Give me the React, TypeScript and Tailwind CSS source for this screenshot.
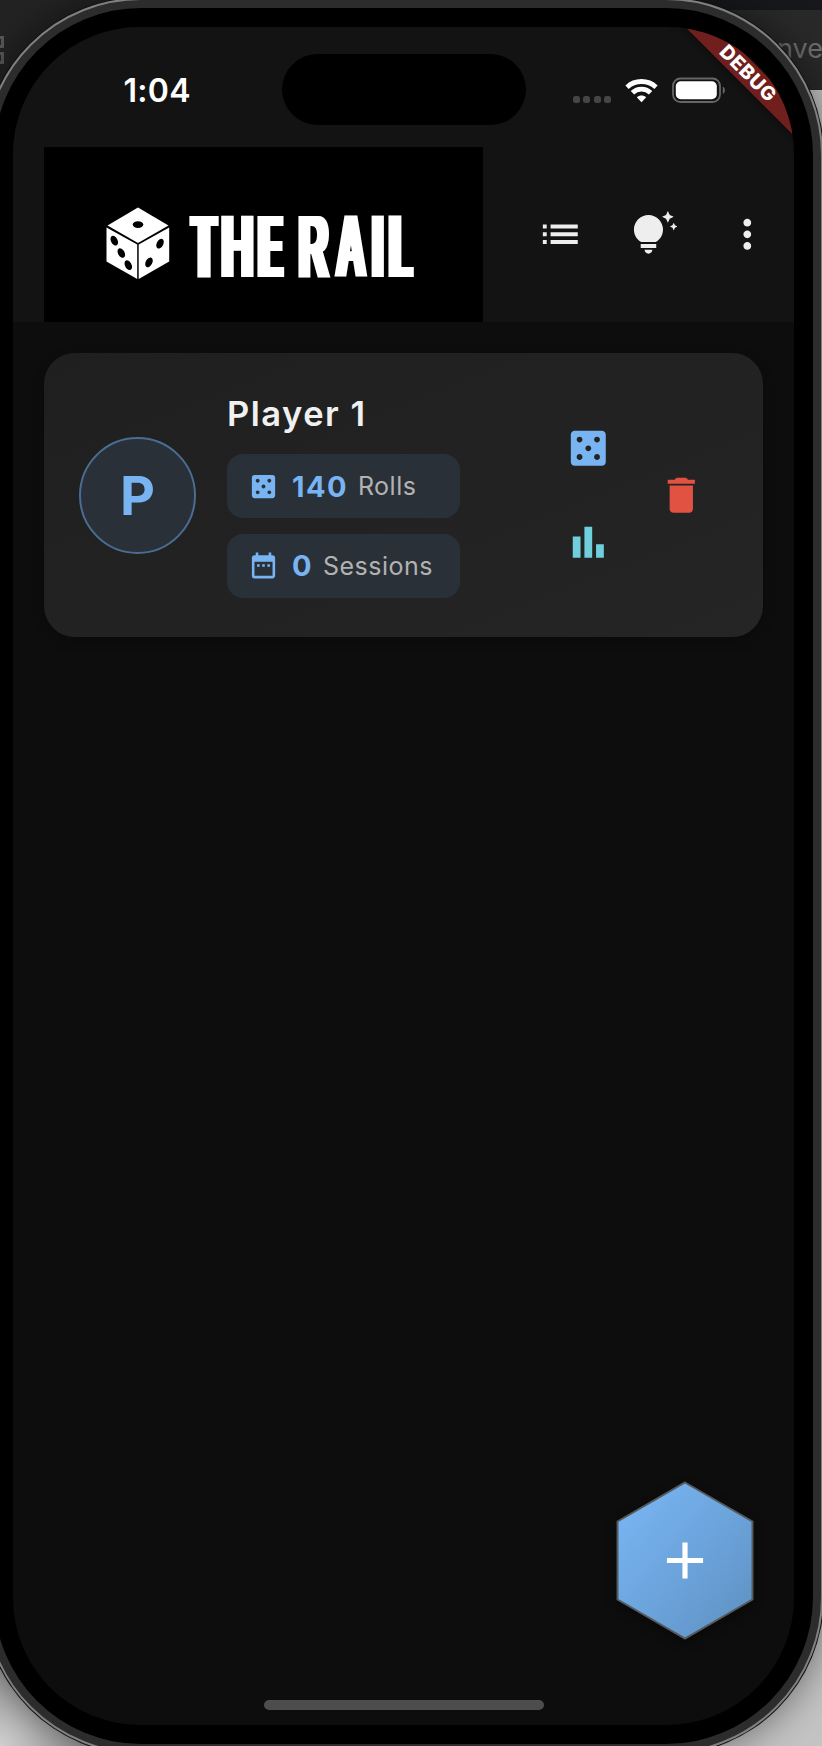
import React from "react";
import { MdAdd, MdCasino, MdDateRange, MdDelete, MdList, MdMoreVert, MdTipsAndUpdates } from "react-icons/md";

type Glyph = { ch: string; x: number; sx: number; filter: string };

const wordmark: Glyph[] = [
  { ch: "T", x: 193, sx: 0.405, filter: "url(#widen4)" },
  { ch: "H", x: 221.2, sx: 0.502, filter: "url(#widen3)" },
  { ch: "E", x: 259.2, sx: 0.374, filter: "url(#widen4)" },
  { ch: "R", x: 298.8, sx: 0.459, filter: "url(#widen3)" },
  { ch: "A", x: 336.6, sx: 0.449, filter: "url(#widen3)" },
  { ch: "I", x: 371.8, sx: 0.485, filter: "url(#widen3)" },
  { ch: "L", x: 390.2, sx: 0.379, filter: "url(#widen4)" },
];

function Logo() {
  return (
    <svg viewBox="44 147 439 175" className="h-[175px] w-[439px] bg-black" role="img">
      <defs>
        <filter id="widen3" x="-50%" y="-10%" width="200%" height="120%">
          <feMorphology operator="dilate" radius="3 0" />
        </filter>
        <filter id="widen4" x="-50%" y="-10%" width="200%" height="120%">
          <feMorphology operator="dilate" radius="4 0" />
        </filter>
      </defs>
      <g fill="#fff">
        <path d="M138 207.5 168.5 225.5 138 243 107.5 225.5Z" />
        <path d="M106.5 227.5 137.2 244.5V279L106.5 261.5Z" />
        <path d="M169.2 227.5 138.7 244.5V279L169.2 261.5Z" />
      </g>
      <g fill="#000">
        <ellipse cx="138" cy="224.6" rx="5.3" ry="3.4" />
        <ellipse cx="114.3" cy="240.7" rx="3.3" ry="5.2" transform="rotate(-28 114.3 240.7)" />
        <ellipse cx="121.3" cy="253" rx="3.3" ry="5.2" transform="rotate(-28 121.3 253)" />
        <ellipse cx="128.3" cy="265.2" rx="3.3" ry="5.2" transform="rotate(-28 128.3 265.2)" />
        <ellipse cx="160" cy="243.7" rx="3.3" ry="5.2" transform="rotate(28 160 243.7)" />
        <ellipse cx="149" cy="262.3" rx="3.3" ry="5.2" transform="rotate(28 149 262.3)" />
      </g>
      <g fill="#fff" className="font-['Liberation_Sans',sans-serif] text-[89px] font-bold">
        {wordmark.map((g) => (
          <g key={g.ch} filter={g.filter}>
            <text transform={`translate(${g.x} 277) scale(${g.sx} 1)`}>{g.ch}</text>
          </g>
        ))}
      </g>
    </svg>
  );
}

function StatusBar() {
  return (
    <div className="flex h-[120px] items-start">
      <span className="ml-[110.5px] mt-[44px] w-[90px] text-[32px] leading-[40px] font-semibold tracking-[0.3px] text-white">1:04</span>
      <div className="ml-[68px] mt-[27px] h-[71px] w-[244px] rounded-full bg-black" />
      <div className="ml-[47px] mt-[69px] flex gap-[3.5px]">
        {[0, 1, 2, 3].map((i) => (
          <span key={i} className="size-[7px] rounded-[2.5px] bg-[#454545]" />
        ))}
      </div>
      <svg viewBox="0 0 33 25" className="ml-[14px] mt-[51px] h-[25px] w-[33px]" fill="none" stroke="#fff" strokeWidth="4.8">
        <path d="M2 9.2C10 1.6 23 1.6 31 9.2" />
        <path d="M7.4 14.8C12.5 9.8 20.5 9.8 25.6 14.8" />
        <path d="M16.5 24.3 11.8 19.3C14.5 16.8 18.5 16.8 21.2 19.3Z" fill="#fff" stroke="none" />
      </svg>
      <svg viewBox="0 0 54 26" className="ml-[13.5px] mt-[50px] h-[26px] w-[54px]">
        <rect x="1" y="1.5" width="47" height="23.5" rx="7.5" fill="none" stroke="#666" strokeWidth="1.8" />
        <rect x="3.8" y="4.2" width="41" height="18" rx="5" fill="#fff" />
        <path d="M50.8 9.5C53.6 11 53.6 15.5 50.8 17Z" fill="#666" />
      </svg>
    </div>
  );
}

function Chip({ icon, value, label }: { icon: React.ReactNode; value: string; label: string }) {
  return (
    <div className="flex h-[64px] w-[233px] shrink-0 items-center rounded-[16px] bg-[#2a3038] pl-[21px]">
      {icon}
      <span className="ml-[13px] pt-px text-[29px] font-bold tracking-[1.4px] text-[#78b4f2]">{value}</span>
      <span className="ml-[10px] pt-[2px] text-[25px] tracking-[0.5px] text-[#b2b2b2]">{label}</span>
    </div>
  );
}

function PlayerCard() {
  return (
    <section className="mx-[31px] mt-[31px] flex h-[284px] rounded-[31px] bg-linear-to-br from-[#1f1f1f] to-[#252525] shadow-[0_4px_14px_rgba(0,0,0,0.2)]">
      <div className="ml-[35px] mt-[83.5px] flex size-[117px] items-center justify-center rounded-full border-2 border-[#4a6d93] bg-[#293038] text-[54px] font-bold text-[#78b4f2]">
        P
      </div>
      <div className="ml-[31px] mt-[37px] flex w-[233px] flex-col">
        <h2 className="h-[64px] text-[34.5px] leading-[47px] font-semibold tracking-[1.5px] text-[#f0f0f0]">Player 1</h2>
        <Chip icon={<MdCasino className="size-[31px] text-[#78b4f2]" />} value="140" label="Rolls" />
        <div className="h-[15.5px] shrink-0" />
        <Chip icon={<MdDateRange className="size-[31px] text-[#78b4f2]" />} value="0" label="Sessions" />
      </div>
      <div className="ml-[104.5px] flex flex-col justify-center gap-[47px]">
        <MdCasino className="size-[46.6px] text-[#78b4f2]" />
        <svg viewBox="0 0 24 24" className="size-[46.6px] fill-[#70cfdc]">
          <path d="M4 9h4v11H4zm12 4h4v7h-4zM10 4h4v16h-4z" />
        </svg>
      </div>
      <div className="ml-[46.5px] flex items-center">
        <MdDelete className="size-[46.6px] text-[#e15243]" />
      </div>
    </section>
  );
}

function Screen() {
  return (
    <div className="relative flex h-[1698px] w-[781px] flex-col overflow-hidden rounded-[127px] bg-[#0d0d0d]">
      <header className="h-[295px] shrink-0 bg-[#131313]">
        <StatusBar />
        <div className="flex h-[175px] items-center pl-[31px]">
          <Logo />
          <MdList className="ml-[54px] size-[46.6px] text-[#eee]" />
          <MdTipsAndUpdates className="ml-[47px] size-[46.6px] text-[#eee]" />
          <MdMoreVert className="ml-[46.5px] size-[46.6px] text-[#eee]" />
        </div>
      </header>
      <PlayerCard />
      <button className="mt-auto mr-[40px] mb-[60px] self-end">
        <svg viewBox="0 0 138 159" className="block h-[159px] w-[138px] drop-shadow-[0_4px_6px_rgba(0,0,0,0.35)]">
          <defs>
            <linearGradient id="fab" x1="0" y1="0" x2="1" y2="1">
              <stop offset="0.1" stopColor="#78b4f2" />
              <stop offset="0.9" stopColor="#6094c6" />
            </linearGradient>
          </defs>
          <path d="M69 1.5 136.5 40.5V118.5L69 157.5 1.5 118.5V40.5Z" fill="url(#fab)" stroke="#555a5f" strokeWidth="2" />
          <MdAdd x="38" y="48.5" size={62} color="#fff" />
        </svg>
      </button>
      <div className="mb-[15.5px] ml-[251px] h-[10px] w-[280px] rounded-full bg-[#4d4d4d]" />
      <div className="absolute top-[34.8px] left-[585px] flex h-[23.3px] w-[300px] rotate-45 items-center justify-center bg-[#701f1c] text-[19.5px] font-extrabold tracking-[0.7px] text-white shadow-[0_0_12px_rgba(0,0,0,0.5)]">
        DEBUG
      </div>
    </div>
  );
}

function Desktop() {
  return (
    <div className="flex h-full w-full justify-between">
      <div className="flex w-[300px] flex-col bg-[#232323]">
        <div className="h-[36px]" />
        <span className="-ml-2 size-[12px] border-3 border-[#575959]" />
        <span className="mt-1 -ml-2 size-[12px] border-3 border-[#575959]" />
        <div className="mt-auto h-[600px] bg-radial-[circle_at_0%_100%] from-[#cfcfcf] to-[#555] to-30%" />
      </div>
      <div className="flex w-[300px] flex-col">
        <div className="h-[10px] bg-[#17181b]" />
        <div className="flex h-[80px] justify-end bg-[#292929] pt-[23px] text-[27px] leading-[32px] text-[#6e6e6e]">
          <span className="-mr-px">nve</span>
        </div>
        <div className="flex-1 bg-[#c4c4c4]" />
      </div>
    </div>
  );
}

export default function App() {
  return (
    <main className="relative h-[1746px] w-[822px] overflow-hidden bg-[#232323] font-['Inter',sans-serif]">
      <Desktop />
      <div className="absolute top-[-2px] left-[-16px] rounded-[157px] border-2 border-[#808080] bg-[#2c2c2c] p-[8px] shadow-[0_0_0_1px_#111,0_0_40px_rgba(0,0,0,0.5)]">
        <div className="rounded-[147px] bg-black p-[19px]">
          <Screen />
        </div>
      </div>
    </main>
  );
}
